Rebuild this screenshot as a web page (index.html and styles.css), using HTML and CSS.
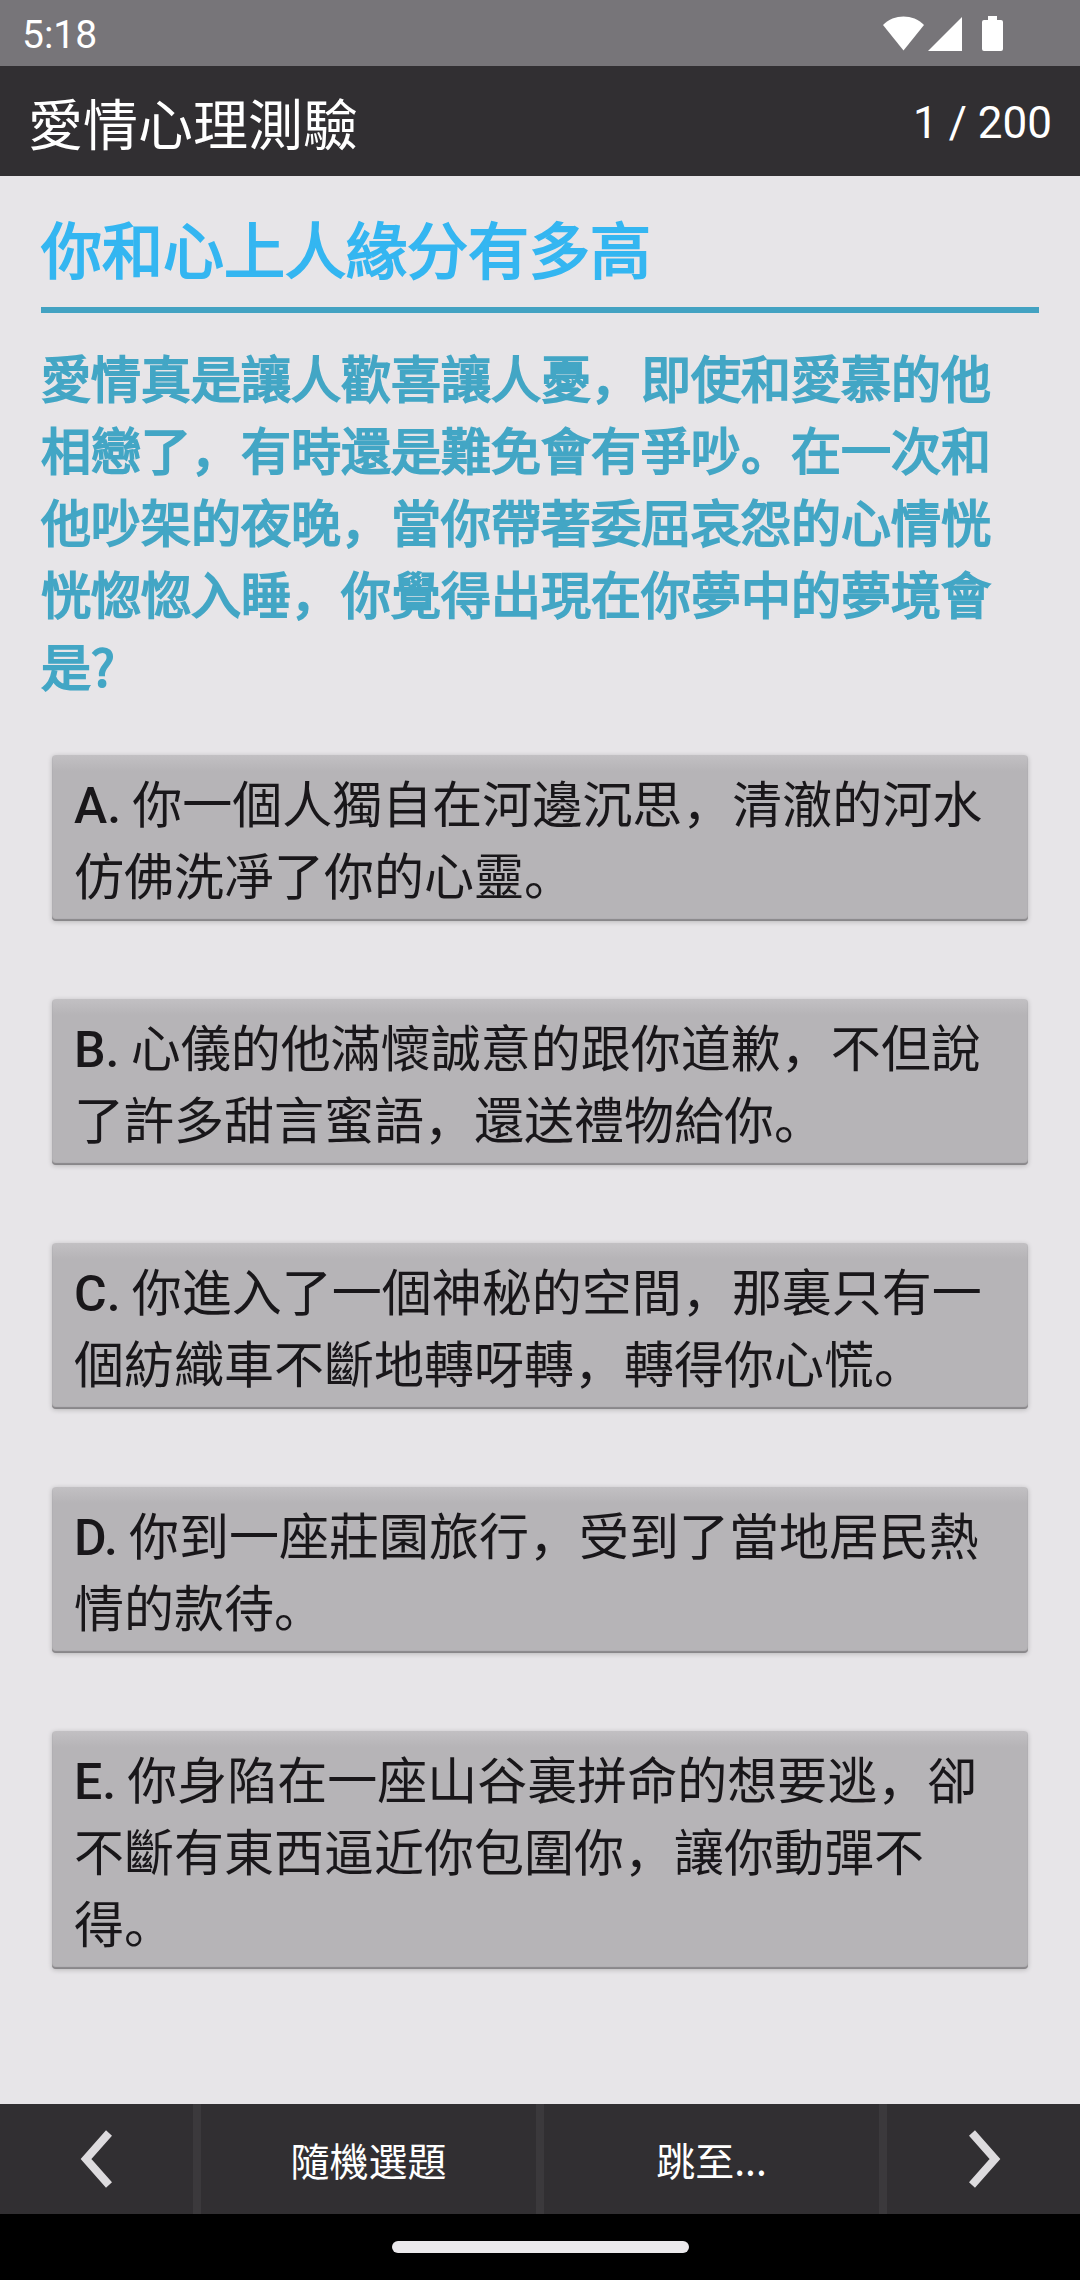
FILE: index.html
```html
<!DOCTYPE html>
<html lang="zh">
<head>
    <meta charset="UTF-8">
    <meta name="viewport" content="width=device-width, initial-scale=1.0">
    <title>愛情心理測驗</title>
    <link rel="stylesheet" href="styles.css">
</head>
<body>
    <div class="status-bar">
        <span class="time">5:18</span>
        <svg class="status-icons" width="120" height="36" viewBox="0 0 120 36" aria-hidden="true">
            <path d="M20.500 34.500 L0 9 C11 -2.300 30 -2.300 41 9 Z"/>
            <path d="M45 35 L79 1 V35 Z"/>
            <path d="M105 0 h9 v4 h4 a2 2 0 0 1 2 2 v27 a2 2 0 0 1 -2 2 h-17 a2 2 0 0 1 -2 -2 v-27 a2 2 0 0 1 2 -2 h4 z"/>
        </svg>
    </div>

    <header class="header">
        <h1>愛情心理測驗</h1>
        <span class="counter">1 / 200</span>
    </header>

    <main class="content">
        <h2>你和心上人緣分有多高</h2>
        <p class="question">愛情真是讓人歡喜讓人憂，即使和愛慕的他相戀了，有時還是難免會有爭吵。在一次和他吵架的夜晚，當你帶著委屈哀怨的心情恍恍惚惚入睡，你覺得出現在你夢中的夢境會是?</p>

        <div class="options">
            <button type="button" class="option"><span class="letter">A.</span> 你一個人獨自在河邊沉思，清澈的河水仿佛洗凈了你的心靈。</button>
            <button type="button" class="option"><span class="letter">B.</span> 心儀的他滿懷誠意的跟你道歉，不但說了許多甜言蜜語，還送禮物給你。</button>
            <button type="button" class="option"><span class="letter">C.</span> 你進入了一個神秘的空間，那裏只有一個紡織車不斷地轉呀轉，轉得你心慌。</button>
            <button type="button" class="option"><span class="letter">D.</span> 你到一座莊園旅行，受到了當地居民熱情的款待。</button>
            <button type="button" class="option"><span class="letter">E.</span> 你身陷在一座山谷裏拼命的想要逃，卻不斷有東西逼近你包圍你，讓你動彈不得。</button>
        </div>
    </main>

    <nav class="toolbar">
        <button type="button" class="arrow" aria-label="上一題">
            <svg width="34" height="60" viewBox="0 0 34 60" aria-hidden="true">
                <path d="M29 4 L6 30 L29 56"/>
            </svg>
        </button>
        <button type="button">隨機選題</button>
        <button type="button">跳至...</button>
        <button type="button" class="arrow" aria-label="下一題">
            <svg width="34" height="60" viewBox="0 0 34 60" aria-hidden="true">
                <path d="M5 4 L28 30 L5 56"/>
            </svg>
        </button>
    </nav>

    <div class="home-bar"><div class="pill"></div></div>
</body>
</html>
```
FILE: styles.css
```css
* {
    box-sizing: border-box;
}

body {
    font-family: "Noto Sans CJK SC", Roboto, sans-serif;
    background-color: #e7e5e8;
    color: #19171a;
    display: flex;
    flex-direction: column;
    min-height: 100vh;
    margin: 0;
}

h1, h2, p {
    margin: 0;
}

button {
    border: none;
    font-family: inherit;
    font-weight: 400;
    cursor: pointer;
}

/* Status bar */
.status-bar {
    display: flex;
    justify-content: space-between;
    align-items: center;
    height: 66px;
    padding: 2px 77px 0 22px;
    background-color: #777579;
    color: #fff;
}

.time {
    padding-top: 2px;
    font-family: Roboto, sans-serif;
    font-size: 39px;
    line-height: 44px;
}

.status-icons {
    fill: #fff;
}

/* Header */
.header {
    display: flex;
    justify-content: space-between;
    align-items: center;
    height: 110px;
    padding: 0 28px;
    background-color: #312f32;
    color: #fff;
}

.header h1 {
    font-size: 55px;
    font-weight: 400;
    line-height: 80px;
}

.counter {
    padding-top: 4px;
    font-family: Roboto, sans-serif;
    font-size: 44px;
    line-height: 52px;
}

/* Question */
.content {
    flex: 1;
    padding: 28px 41px;
}

.content h2 {
    padding-bottom: 15px;
    border-bottom: 6px solid #43a2c2;
    color: #34b6f1;
    font-size: 61px;
    font-weight: 400;
    line-height: 88px;
    -webkit-text-stroke: 2px #34b6f1;
}

.question {
    margin-top: 27px;
    color: #43a6c5;
    font-size: 50px;
    font-weight: 400;
    line-height: 72px;
    -webkit-text-stroke: 2px #43a6c5;
}

/* Options */
.options {
    display: flex;
    flex-direction: column;
    gap: 78px;
    padding: 55px 11px 0;
}

.option {
    padding: 10px 22px 12px;
    border-radius: 4px;
    background: linear-gradient(#c2c0c3, #b6b4b7 16px);
    box-shadow: inset 0 -2px 1px #89878a, 0 1px 5px rgba(0, 0, 0, 0.2);
    color: #19171a;
    font-size: 50px;
    line-height: 72px;
    text-align: left;
}

.letter {
    font-family: Roboto, sans-serif;
    font-weight: 500;
    line-height: 1;
}

/* Bottom toolbar */
.toolbar {
    display: grid;
    grid-template-columns: 193fr 335fr 335fr 193fr;
    gap: 8px;
    height: 110px;
    background-color: #3b393c;
}

.toolbar button {
    display: flex;
    justify-content: center;
    align-items: center;
    padding: 0;
    background-color: #312f32;
    color: #fff;
    font-size: 39px;
    line-height: 56px;
}

.arrow path {
    fill: none;
    stroke: #dddbde;
    stroke-width: 8;
}

/* Gesture bar */
.home-bar {
    display: flex;
    justify-content: center;
    align-items: center;
    height: 66px;
    background-color: #000;
}

.pill {
    width: 297px;
    height: 12px;
    border-radius: 6px;
    background-color: #ebe9ec;
}
```
